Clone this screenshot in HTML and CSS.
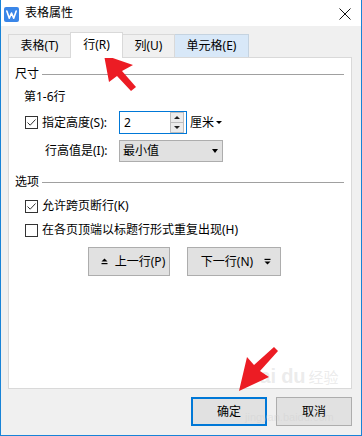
FILE: index.html
```html
<!DOCTYPE html>
<html lang="zh-CN">
<head>
<meta charset="utf-8">
<title>表格属性</title>
<link rel="stylesheet" href="styles.css">
</head>
<body>
<div class="window">
  <div class="titlebar">
    <svg class="title-icon" viewBox="0 0 15 15" width="15" height="15">
      <rect x="0" y="0" width="15" height="15" rx="2" fill="#3a86e8"/>
      <path d="M2.8 4 L5.3 11.2 L7.5 6 L9.7 11.2 L12.2 4" fill="none" stroke="#fff" stroke-width="1.6" stroke-linejoin="round" stroke-linecap="round"/>
    </svg>
    <span class="title-text">表格属性</span>
    <svg class="close" viewBox="0 0 12 12" width="12" height="12">
      <path d="M0.5 0.5 L11.5 11.5 M11.5 0.5 L0.5 11.5" stroke="#111" stroke-width="1"/>
    </svg>
  </div>
  <div class="content">
    <div class="tabs">
      <div class="tab tab-first">表格(T)</div>
      <div class="tab tab-active">行(R)</div>
      <div class="tab tab-col">列(U)</div>
      <div class="tab tab-hover">单元格(E)</div>
    </div>
    <div class="panel">
      <div class="group-head">尺寸</div>
      <div class="row-text">第1-6行</div>
      <div class="row-height">
        <div class="label-col">
          <span class="cb"><svg viewBox="0 0 11 11" width="11" height="11"><polyline points="1.5,5.5 4.2,8.2 9.5,2.5" fill="none" stroke="#333" stroke-width="1"/></svg></span>
          <span class="cb-label">指定高度(S):</span>
        </div>
        <div class="spin">
          <span class="spin-val">2</span>
          <div class="spin-btns">
            <span class="spin-btn"><i class="tri-up"></i></span>
            <span class="spin-btn"><i class="tri-down"></i></span>
          </div>
        </div>
        <span class="unit">厘米<i class="tri-unit"></i></span>
      </div>
      <div class="row-select">
        <div class="label-col label-indent">行高值是(I):</div>
        <div class="select">
          <span>最小值</span>
          <i class="tri-select"></i>
        </div>
      </div>
      <div class="group-head group-two">选项</div>
      <div class="row-check">
        <span class="cb"><svg viewBox="0 0 11 11" width="11" height="11"><polyline points="1.5,5.5 4.2,8.2 9.5,2.5" fill="none" stroke="#333" stroke-width="1"/></svg></span>
        <span class="cb-label">允许跨页断行(K)</span>
      </div>
      <div class="row-check">
        <span class="cb"></span>
        <span class="cb-label">在各页顶端以标题行形式重复出现(H)</span>
      </div>
      <div class="nav-row">
        <div class="btn btn-prev">
          <svg viewBox="0 0 7 7" width="7" height="7"><polygon points="0.5,3.5 3.5,0.5 6.5,3.5" fill="#000"/><rect x="0.5" y="5" width="6" height="1.2" fill="#000"/></svg>
          <span>上一行(P)</span>
        </div>
        <div class="btn btn-next">
          <span>下一行(N)</span>
          <svg viewBox="0 0 7 7" width="7" height="7"><rect x="0.5" y="0.8" width="6" height="1.2" fill="#000"/><polygon points="0.5,3.5 6.5,3.5 3.5,6.5" fill="#000"/></svg>
        </div>
      </div>
    </div>
    <div class="footer">
      <div class="btn btn-ok">确定</div>
      <div class="btn btn-cancel">取消</div>
    </div>
  </div>

  <div class="watermark">
    <div class="wm-line"><span class="wm-big">Bai</span><span class="wm-big wm-du">du</span><span class="wm-cn">经验</span></div>
    <div class="wm-small">jingyan.baidu.com</div>
  </div>

  <svg class="annot" viewBox="0 0 362 436" width="362" height="436">
    <polygon points="103,55 132,65 121,71 135,87 130,91 116,76 108,82" fill="#ec1c24"/>
    <polygon points="238,391 246,357 253,365 273,347 277,351 259,371 268,377" fill="#ec1c24"/>
  </svg>
</div>
</body>
</html>
```

FILE: styles.css
```css
* { box-sizing: border-box; }

body {
  margin: 0;
  font-family: "Noto Sans", "Noto Sans CJK SC", sans-serif;
  font-size: 12px;
  color: #000;
}

.window {
  position: relative;
  width: 362px;
  height: 436px;
  border: 1px solid #1883d7;
  border-top: none;
  background: #f0f0f0;
  display: flex;
  flex-direction: column;
  overflow: hidden;
}

.titlebar {
  height: 26px;
  background: #fff;
  display: flex;
  align-items: center;
  padding-left: 3px;
  flex: none;
}

.title-icon { margin-top: 2px; flex: none; }

.title-text {
  margin-left: 6px;
  line-height: 16px;
  font-size: 12px;
}

.close { margin-left: auto; margin-right: 10px; margin-top: 2px; }

.content {
  padding: 6px 9px 0 7px;
  display: flex;
  flex-direction: column;
}

.tabs {
  display: flex;
  align-items: flex-end;
  height: 25px;
}

.tab {
  height: 23px;
  line-height: 21px;
  text-align: center;
  background: #f0f0f0;
  border-top: 1px solid #d9d9d9;
  border-right: 1px solid #d9d9d9;
  white-space: nowrap;
}

.tab-first { width: 63px; border-left: 1px solid #d9d9d9; }

.tab-active {
  position: relative;
  z-index: 1;
  width: 53px;
  height: 26px;
  margin-left: -1px;
  margin-bottom: -1px;
  padding-top: 1px;
  background: #fff;
  border-left: 1px solid #d9d9d9;
}

.tab-col { width: 52px; }

.tab-hover {
  width: 74px;
  background: #d8e8f8;
  border-top-color: #c5d3e0;
  border-right-color: #c5d3e0;
}

.panel {
  height: 332px;
  background: #fff;
  border: 1px solid #d9d9d9;
  padding: 8px 7px 0 6px;
  display: flex;
  flex-direction: column;
}

.group-head {
  display: flex;
  align-items: center;
  height: 16px;
  line-height: 16px;
}

.group-head::after {
  content: "";
  flex: 1;
  height: 1px;
  background: #a0a0a0;
  margin-left: 3px;
}

.group-two { margin-top: 12px; }

.row-text {
  margin: 7px 0 0 9px;
  height: 16px;
  line-height: 16px;
}

.row-height {
  margin: 6px 0 0 10px;
  height: 23px;
  display: flex;
  align-items: center;
}

.row-select {
  margin: 6px 0 0 10px;
  height: 22px;
  display: flex;
  align-items: center;
}

.label-col {
  width: 94px;
  display: flex;
  align-items: center;
  flex: none;
  line-height: 16px;
}

.label-indent { padding-left: 20px; }

.cb {
  width: 13px;
  height: 13px;
  border: 1px solid #333;
  background: #fff;
  display: flex;
  flex: none;
}

.cb-label {
  margin-left: 4px;
  line-height: 16px;
  white-space: nowrap;
}

.spin {
  width: 68px;
  height: 23px;
  border: 1px solid #0078d7;
  display: flex;
  align-items: center;
  padding-left: 4px;
  padding-right: 2px;
}

.spin-val { flex: 1; line-height: 16px; }

.spin-btns {
  width: 14px;
  height: 21px;
  display: flex;
  flex-direction: column;
  border: 1px solid #bdbdbd;
  background: #ececec;
}

.spin-btn {
  flex: 1;
  display: flex;
  align-items: center;
  justify-content: center;
}

.spin-btn + .spin-btn { border-top: 1px solid #bdbdbd; }

.tri-up, .tri-down, .tri-unit, .tri-select {
  display: block;
  width: 0;
  height: 0;
  border-left: 3px solid transparent;
  border-right: 3px solid transparent;
}

.tri-up { border-bottom: 3px solid #222; }
.tri-down { border-top: 3px solid #222; }

.unit {
  margin-left: 3px;
  display: flex;
  align-items: center;
  line-height: 16px;
}

.tri-unit { border-top: 3px solid #000; margin-left: 2px; }

.select {
  width: 104px;
  height: 22px;
  background: #e1e1e1;
  border: 1px solid #adadad;
  padding-left: 3px;
  display: flex;
  align-items: center;
  line-height: 16px;
}

.tri-select {
  margin-left: auto;
  margin-right: 4px;
  border-left-width: 3.5px;
  border-right-width: 3.5px;
  border-top: 4px solid #000;
}

.row-check {
  margin: 8px 0 0 10px;
  height: 16px;
  display: flex;
  align-items: center;
}

.nav-row {
  margin: 9px 0 0 73px;
  display: flex;
  gap: 17px;
}

.btn {
  height: 29px;
  background: #e1e1e1;
  border: 1px solid #adadad;
  display: flex;
  align-items: center;
  justify-content: center;
  line-height: 16px;
  white-space: nowrap;
}

.btn-prev { width: 82px; gap: 7px; padding-left: 8px; }
.btn-next { width: 94px; gap: 11px; padding-left: 4px; }

.footer {
  margin-top: 8px;
  display: flex;
  justify-content: flex-end;
  gap: 9px;
}

.btn-ok { width: 76px; border: 2px solid #0078d7; }
.btn-cancel { width: 76px; }

.watermark {
  position: absolute;
  left: 244px;
  top: 364px;
  pointer-events: none;
  color: rgba(205, 205, 205, 0.4);
  font-family: "Liberation Sans", sans-serif;
  white-space: nowrap;
}

.wm-line {
  display: flex;
  align-items: baseline;
  line-height: 24px;
}

.wm-big {
  font-size: 20px;
  font-weight: bold;
}

.wm-du { margin-left: 5px; }

.wm-cn {
  font-family: "Noto Sans CJK SC", sans-serif;
  font-size: 15px;
  margin-left: 3px;
}

.wm-small {
  margin-top: 22px;
  font-size: 11px;
  line-height: 12px;
}

.annot {
  position: absolute;
  left: 0;
  top: 0;
  pointer-events: none;
}
```
